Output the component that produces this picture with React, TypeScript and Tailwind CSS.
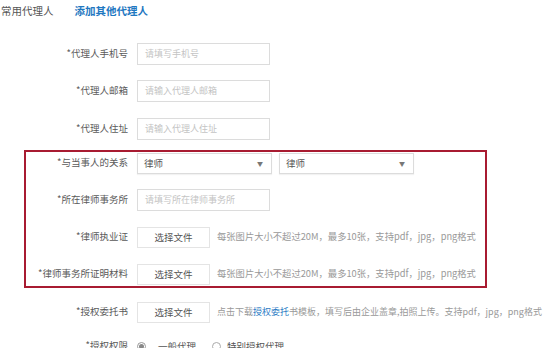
import React from "react";

const font = { fontFamily: '"Noto Sans CJK SC", "Noto Sans", sans-serif' };

function Label({ text, w }: { text: string; w: string }) {
  return (
    <div className={`${w} shrink-0 text-right text-[9.5px] text-[#5a5a5a] pr-[9px] leading-none`}>
      *{text}
    </div>
  );
}

function TextInput({ ph }: { ph: string }) {
  return (
    <div className="w-[133px] h-[22px] border border-[#dcdcdc] bg-white flex items-center pl-[7px] text-[9px] text-[#c4c4c4]">
      {ph}
    </div>
  );
}

function Select() {
  return (
    <div className="w-[135px] h-[21px] border border-[#dcdcdc] bg-white flex items-center justify-between pl-[6px] pr-[8px] text-[9.5px] text-[#555] shadow-[0_1px_1px_rgba(0,0,0,0.05)]">
      <span>律师</span>
      <span className="text-[6px] text-[#777]">▼</span>
    </div>
  );
}

function FileBtn() {
  return (
    <div className="w-[73px] h-[21px] border border-[#e4e4e4] bg-white flex items-center justify-center text-[9.5px] text-[#555]">
      选择文件
    </div>
  );
}

const desc = "每张图片大小不超过20M，最多10张，支持pdf，jpg，png格式";

export default function App() {
  return (
    <div className="w-[553px] h-[348px] overflow-hidden bg-white relative" style={font}>
      <div className="h-[22px] flex items-center pl-[1px] text-[10.5px]">
        <span className="text-[#555]">常用代理人</span>
        <span className="ml-[21px] text-[#1f78c1] font-bold">添加其他代理人</span>
      </div>

      <div className="mt-[21px] flex items-center h-[22px]">
        <Label text="代理人手机号" w="w-[137px]" />
        <TextInput ph="请填写手机号" />
      </div>
      <div className="mt-[15px] flex items-center h-[22px]">
        <Label text="代理人邮箱" w="w-[137px]" />
        <TextInput ph="请输入代理人邮箱" />
      </div>
      <div className="mt-[16px] flex items-center h-[22px]">
        <Label text="代理人住址" w="w-[137px]" />
        <TextInput ph="请输入代理人住址" />
      </div>

      <div className="mt-[10px] ml-[24px] w-[463px] border-2 border-[#a81b31] pb-[1px] flex flex-col gap-[15px]">
        <div className="flex items-center h-[22px]">
          <Label text="与当事人的关系" w="w-[111px]" />
          <Select />
          <div className="w-[7px]" />
          <Select />
        </div>
        <div className="flex items-center h-[22px]">
          <Label text="所在律师事务所" w="w-[111px]" />
          <TextInput ph="请填写所在律师事务所" />
        </div>
        <div className="flex items-center h-[22px]">
          <Label text="律师执业证" w="w-[111px]" />
          <FileBtn />
          <span className="ml-[7px] text-[9.3px] text-[#999] whitespace-nowrap">{desc}</span>
        </div>
        <div className="flex items-center h-[22px]">
          <Label text="律师事务所证明材料" w="w-[111px]" />
          <FileBtn />
          <span className="ml-[7px] text-[9.3px] text-[#999] whitespace-nowrap">{desc}</span>
        </div>
      </div>

      <div className="mt-[13px] flex items-center h-[22px]">
        <Label text="授权委托书" w="w-[137px]" />
        <FileBtn />
        <span className="ml-[7px] text-[9px] text-[#999] whitespace-nowrap">
          点击下载<span className="text-[#2b7bc4]">授权委托</span>书模板，填写后由企业盖章,拍照上传。支持pdf，jpg，png格式
        </span>
      </div>

      <div className="mt-[12px] flex items-center h-[22px] text-[9.5px] text-[#555]">
        <Label text="授权权限" w="w-[137px]" />
        <span className="w-[9px] h-[9px] rounded-full border border-[#999] flex items-center justify-center">
          <span className="w-[5px] h-[5px] rounded-full bg-[#888]" />
        </span>
        <span className="ml-[12px]">一般代理</span>
        <span className="ml-[16px] w-[9px] h-[9px] rounded-full border border-[#aaa]" />
        <span className="ml-[6px]">特别授权代理</span>
      </div>
    </div>
  );
}
